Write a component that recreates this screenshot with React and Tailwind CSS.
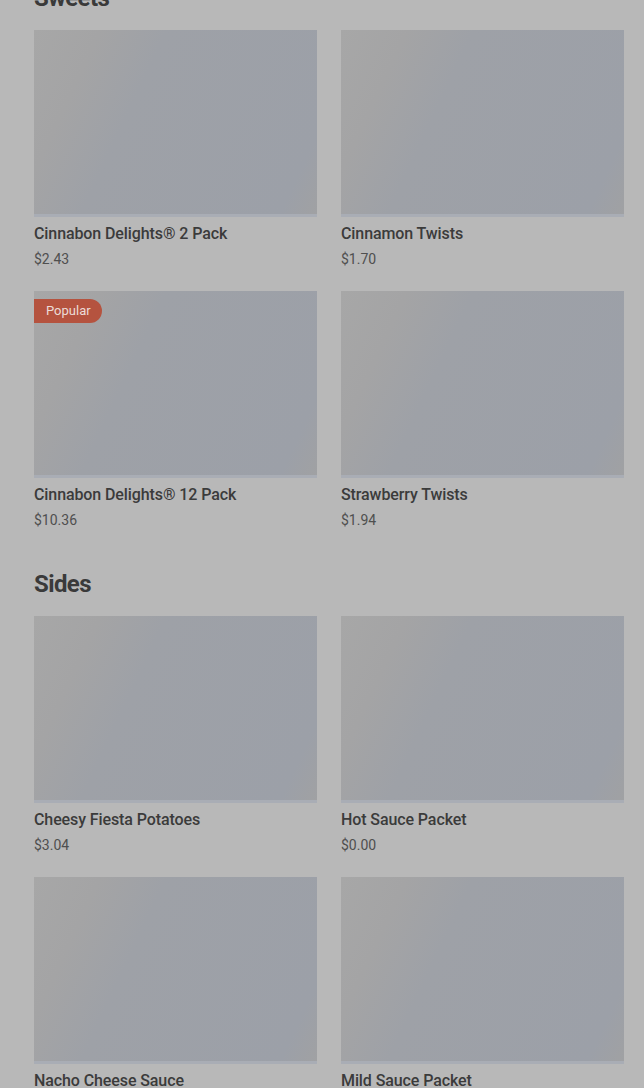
import React from 'react';

const SECTIONS = [
  {
    title: "Sweets",
    items: [
      { name: "Cinnabon Delights® 2 Pack", price: "$2.43" },
      { name: "Cinnamon Twists", price: "$1.70" },
      { name: "Cinnabon Delights® 12 Pack", price: "$10.36", popular: true },
      { name: "Strawberry Twists", price: "$1.94" },
    ],
  },
  {
    title: "Sides",
    items: [
      { name: "Cheesy Fiesta Potatoes", price: "$3.04" },
      { name: "Hot Sauce Packet", price: "$0.00" },
      { name: "Nacho Cheese Sauce", price: "$1.10" },
      { name: "Mild Sauce Packet", price: "$0.00" },
    ],
  },
];

function ItemCard({ item }) {
  return (
    <div className="flex flex-col">
      {/* image placeholder */}
      <div className="relative h-[187px] w-full border-b-[3px] border-[#a9adb5] bg-[linear-gradient(115deg,#a7a7a7_0%,#a4a4a5_18%,#9ea1a7_36%,#9ca0a8_90%,#a0a1a3_100%)]">
        {item.popular && (
          <span className="absolute left-0 top-[8px] flex h-6 items-center rounded-r-full bg-[#b5533f] pl-3 pr-[11px] text-[13px] text-[#ecdcd7]">
            Popular
          </span>
        )}
      </div>
      <p className="mt-[5px] text-[16px] font-medium leading-6 tracking-[-0.1px] text-[#3b3b3b]">{item.name}</p>
      <p className="mt-[3px] text-[14px] leading-5 text-[#4f4f4f]">{item.price}</p>
    </div>
  );
}

export default function App() {
  return (
    <div className="min-h-screen overflow-hidden bg-[#b8b8b8] pl-[34px] pr-[20px] font-['Roboto','Liberation_Sans',sans-serif]">
      {SECTIONS.map((section, i) => (
        <section key={section.title} className={i === 0 ? "-mt-[18px]" : "mt-[38px]"}>
          <h2 className="mb-4 text-[24px] font-bold leading-8 tracking-tight text-[#3a3a3a]">
            {section.title}
          </h2>
          <div className="grid grid-cols-2 gap-x-6 gap-y-[22px]">
            {section.items.map((item) => (
              <ItemCard key={item.name} item={item} />
            ))}
          </div>
        </section>
      ))}
    </div>
  );
}
